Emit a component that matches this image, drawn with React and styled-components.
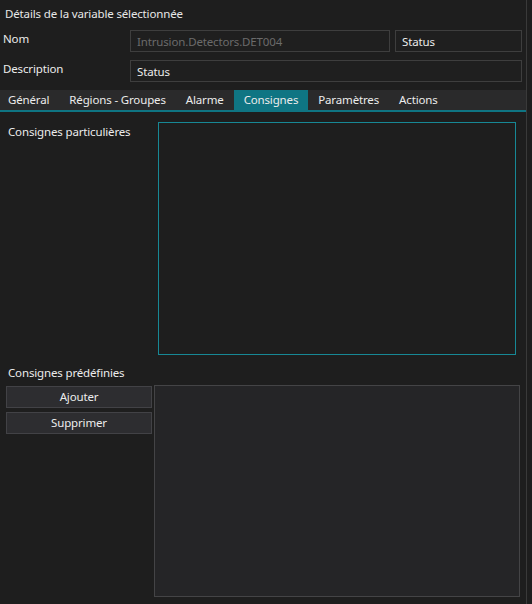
import React from "react"
import styled, { createGlobalStyle } from "styled-components"

const GlobalStyle = createGlobalStyle`
  html, body {
    margin: 0;
    padding: 0;
    background: #1e1e1e;
  }
  body {
    font-family: "Noto Sans", "Open Sans", sans-serif;
    font-size: 11.5px;
    letter-spacing: -0.15px;
    color: #e6e6e6;
  }
`

const tabs = ["Général", "Régions - Groupes", "Alarme", "Consignes", "Paramètres", "Actions"]

const App = () => {
  return (
    <>
      <GlobalStyle />
      <Window>
        <Panel>
          <Title>Détails de la variable sélectionnée</Title>
          <FormGrid>
            <Label>Nom</Label>
            <Field disabled>Intrusion.Detectors.DET004</Field>
            <Field>Status</Field>
            <Label>Description</Label>
            <Field wide>Status</Field>
          </FormGrid>
          <TabBar>
            {tabs.map((tab) => (
              <Tab key={tab} active={tab === "Consignes"}>
                {tab}
              </Tab>
            ))}
          </TabBar>
          <TabContent>
            <ParticularRow>
              <SectionLabel>Consignes particulières</SectionLabel>
              <TextArea />
            </ParticularRow>
            <SectionLabel spaced>Consignes prédéfinies</SectionLabel>
            <PredefinedRow>
              <ButtonColumn>
                <Button>Ajouter</Button>
                <Button>Supprimer</Button>
              </ButtonColumn>
              <ListBox />
            </PredefinedRow>
          </TabContent>
        </Panel>
        <Divider />
      </Window>
    </>
  )
}

export default App

const Window = styled.div`
  display: flex;
  width: 532px;
  height: 604px;
  overflow: hidden;
`

const Panel = styled.div`
  width: 526px;
  display: flex;
  flex-direction: column;
  background: #1e1e1e;
`

const Divider = styled.div`
  width: 1px;
  background: #3a3a3a;
`

const Title = styled.div`
  height: 26px;
  padding: 6px 0 0 5px;
  box-sizing: border-box;
  line-height: 16px;
  color: #e8e8e8;
`

const FormGrid = styled.div`
  display: grid;
  grid-template-columns: 125px 260px 127px;
  column-gap: 5px;
  row-gap: 8px;
  padding-top: 4px;
`

const Label = styled.div`
  padding: 1px 0 0 3px;
  line-height: 16px;
  color: #ececec;
  white-space: nowrap;
`

const Field = styled.div`
  grid-column: ${(p) => (p.wide ? "2 / 4" : "auto")};
  height: 22px;
  box-sizing: border-box;
  border: 1px solid #3e3e3e;
  background: #1f1f1f;
  padding: 1px 6px 0;
  line-height: 20px;
  color: ${(p) => (p.disabled ? "#6b6b6b" : "#ececec")};
  white-space: nowrap;
  overflow: hidden;
`

const TabBar = styled.div`
  display: flex;
  margin-top: 8px;
  height: 22px;
  box-sizing: border-box;
  background: #2a2a2b;
  border-bottom: 2px solid #0f7583;
`

const Tab = styled.div`
  padding: 0 10px;
  line-height: 20px;
  height: 20px;
  color: #ececec;
  background: ${(p) => (p.active ? "#0f7583" : "transparent")};
  &:first-child {
    margin-left: -2px;
  }
`

const TabContent = styled.div`
  flex: 1;
  display: flex;
  flex-direction: column;
  padding: 10px 6px 7px 0;
`

const ParticularRow = styled.div`
  display: flex;
  justify-content: space-between;
  align-items: flex-start;
  padding-right: 4px;
`

const SectionLabel = styled.div`
  padding: 2px 0 0 8px;
  margin-top: ${(p) => (p.spaced ? "8px" : "0")};
  line-height: 16px;
  color: #ececec;
`

const TextArea = styled.div`
  width: 358px;
  height: 233px;
  box-sizing: border-box;
  border: 1px solid #178895;
  background: #1e1e1e;
`

const PredefinedRow = styled.div`
  flex: 1;
  display: flex;
  gap: 2px;
  margin-top: 4px;
`

const ButtonColumn = styled.div`
  display: flex;
  flex-direction: column;
  gap: 4px;
  padding: 1px 0 0 6px;
`

const Button = styled.div`
  width: 146px;
  height: 22px;
  box-sizing: border-box;
  border: 1px solid #424246;
  background: #2d2d30;
  text-align: center;
  line-height: 20px;
  color: #ececec;
`

const ListBox = styled.div`
  flex: 1;
  box-sizing: border-box;
  border: 1px solid #444446;
  background: #252527;
`
